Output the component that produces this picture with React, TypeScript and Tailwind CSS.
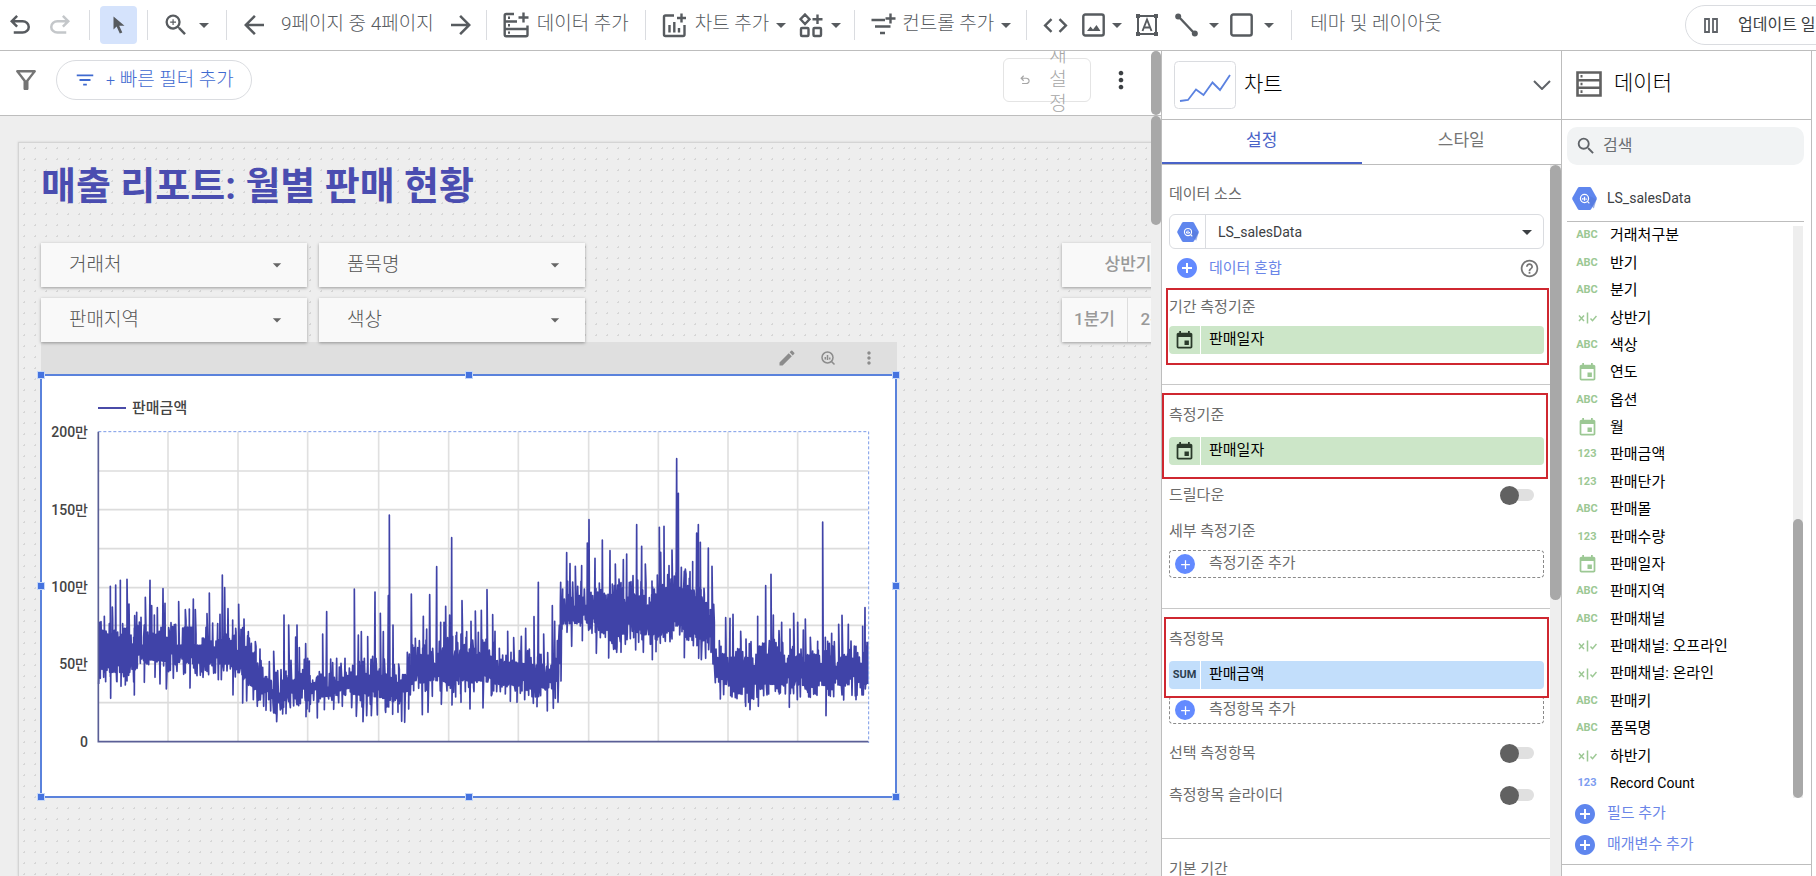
import type { ReactNode } from "react";
import {
  MdAdd,
  MdAddCircle,
  MdArrowDropDown,
  MdCode,
  MdEdit,
  MdEvent,
  MdFilterList,
  MdHelpOutline,
  MdMoreVert,
  MdOutlineFilterAlt,
  MdSearch,
  MdZoomIn,
} from "react-icons/md";

// ── Data ──────────────────────────────────────────────────────────────────────
type FieldType = "text" | "bool" | "date" | "number" | "metric";

const fields: { name: string; type: FieldType }[] = [
  { name: "거래처구분", type: "text" },
  { name: "반기", type: "text" },
  { name: "분기", type: "text" },
  { name: "상반기", type: "bool" },
  { name: "색상", type: "text" },
  { name: "연도", type: "date" },
  { name: "옵션", type: "text" },
  { name: "월", type: "date" },
  { name: "판매금액", type: "number" },
  { name: "판매단가", type: "number" },
  { name: "판매몰", type: "text" },
  { name: "판매수량", type: "number" },
  { name: "판매일자", type: "date" },
  { name: "판매지역", type: "text" },
  { name: "판매채널", type: "text" },
  { name: "판매채널: 오프라인", type: "bool" },
  { name: "판매채널: 온라인", type: "bool" },
  { name: "판매키", type: "text" },
  { name: "품목명", type: "text" },
  { name: "하반기", type: "bool" },
  { name: "Record Count", type: "metric" },
];

const reportFilters = ["거래처", "품목명", "판매지역", "색상"];

// ── Chart series ──────────────────────────────────────────────────────────────
// Chart units: three per pixel. The plot spans x 205..2515 and y 188..1118.
type Point = [number, number];

// [x, typical high, typical low]
const envelope: [number, number, number][] = [
  [205, 775, 925], [310, 790, 925], [330, 790, 885], [500, 790, 900], [600, 800, 900],
  [640, 800, 940], [690, 890, 990], [740, 940, 1020], [780, 890, 1000], [860, 910, 1000],
  [960, 910, 990], [1050, 890, 1000], [1110, 930, 1020], [1150, 850, 950], [1350, 820, 950],
  [1400, 860, 960], [1580, 880, 975], [1588, 720, 920], [1598, 670, 780], [1700, 670, 775],
  [1740, 660, 830], [1800, 670, 800], [1880, 660, 820], [1950, 640, 780], [2000, 650, 820],
  [2045, 710, 840], [2056, 840, 950], [2100, 850, 965], [2160, 850, 990], [2200, 840, 960],
  [2350, 850, 965], [2515, 850, 960],
];

const firstHalf: Point[] = [
  [209, 760], [223, 742], [227, 938], [241, 652], [242, 988], [247, 714], [257, 648], [260, 937],
  [271, 634], [273, 952], [278, 764], [286, 948], [291, 631], [297, 705], [313, 978], [314, 740],
  [320, 730], [333, 745], [343, 940], [346, 685], [360, 634], [365, 710], [373, 738], [375, 925],
  [382, 716], [390, 945], [399, 659], [405, 703], [409, 960], [416, 776], [430, 928], [437, 766],
  [446, 698], [466, 722], [478, 720], [480, 957], [490, 690], [496, 722], [519, 925], [531, 734],
  [538, 672], [548, 775], [565, 932], [570, 736], [574, 932], [577, 618], [584, 656], [594, 719],
  [608, 753], [609, 978], [617, 778], [626, 706], [638, 1002], [642, 750], [650, 996], [655, 788],
  [664, 823], [670, 992], [676, 818], [682, 1012], [690, 840], [708, 1024], [718, 878], [722, 1026],
  [731, 847], [740, 1058], [758, 1035], [762, 738], [768, 1034], [776, 768], [797, 804], [800, 1000],
  [801, 768], [808, 836], [827, 824], [828, 1043], [838, 1028], [862, 1047], [878, 795], [883, 1022],
  [890, 728], [902, 870], [911, 1021], [920, 868], [937, 1012], [945, 868], [965, 1016], [973, 660],
  [979, 1042], [985, 798], [994, 788], [999, 1058], [1010, 1040], [1013, 803], [1024, 1040],
  [1035, 669], [1042, 1038], [1051, 733], [1060, 788], [1067, 1030], [1075, 680], [1078, 438],
  [1088, 1036], [1089, 768], [1104, 1030], [1106, 885], [1115, 1057], [1124, 1060], [1132, 850],
  [1136, 1020], [1144, 675], [1156, 808], [1177, 1037], [1180, 742], [1190, 780], [1194, 1030],
  [1199, 677], [1207, 982], [1220, 593], [1232, 760], [1234, 1006], [1242, 760], [1247, 712],
  [1259, 738], [1265, 506], [1266, 1008], [1277, 984], [1280, 790], [1292, 975], [1293, 1000],
  [1296, 695],
];

const secondHalf: Point[] = [
  [3, 975], [6, 695], [20, 788], [30, 1020], [33, 757], [42, 968], [46, 726], [55, 790], [64, 724],
  [69, 1017], [81, 662], [94, 980], [98, 737], [105, 787], [110, 968], [118, 838], [136, 975],
  [143, 787], [151, 997], [161, 806], [171, 1000], [184, 802], [194, 992], [197, 778], [220, 1003],
  [222, 743], [231, 1013], [235, 640], [242, 980], [251, 795], [262, 1026], [277, 710], [280, 1018],
  [284, 757], [294, 1000], [302, 640], [303, 936], [308, 682], [320, 551], [321, 790], [330, 584],
  [335, 832], [346, 592], [365, 590], [367, 815], [382, 522], [387, 452], [390, 780], [405, 568],
  [409, 853], [418, 642], [427, 513], [446, 867], [450, 545], [457, 645], [466, 585], [470, 850],
  [477, 630], [483, 850], [490, 572], [500, 555], [501, 812], [519, 620], [527, 843], [530, 467],
  [545, 532], [550, 850], [556, 585], [576, 636], [577, 872], [588, 848], [592, 618], [598, 475],
  [602, 550], [610, 805], [612, 472], [627, 590], [630, 818], [636, 543], [650, 269], [655, 373],
  [659, 798], [664, 595], [673, 866], [676, 600], [690, 608], [698, 578], [700, 830], [710, 492],
  [715, 467], [716, 868], [721, 520], [724, 872], [732, 658], [737, 868], [745, 537], [753, 850],
  [756, 592], [761, 706], [778, 815], [781, 990], [797, 746], [810, 748], [812, 980], [819, 736],
  [825, 963], [842, 787], [857, 1012], [858, 810], [870, 1022], [893, 742], [895, 1012], [917, 650],
  [924, 970], [933, 616], [940, 738], [957, 785], [958, 975], [965, 760], [988, 1015], [990, 780],
  [1001, 733], [1012, 992], [1013, 760], [1030, 783], [1036, 750], [1043, 970], [1051, 805],
  [1068, 975], [1075, 843], [1088, 459], [1096, 805], [1098, 1040], [1115, 793], [1116, 962],
  [1136, 766], [1146, 739], [1151, 993], [1165, 766], [1188, 992], [1208, 772], [1210, 978],
  [1215, 716], [1221, 820],
];

function band(x: number): [number, number] {
  const i = Math.max(1, envelope.findIndex((e) => e[0] >= x));
  const [x0, hi0, lo0] = envelope[i - 1];
  const [x1, hi1, lo1] = envelope[i];
  const t = (x - x0) / (x1 - x0);
  return [hi0 + (hi1 - hi0) * t, lo0 + (lo1 - lo0) * t];
}

function buildSeries(): string {
  let seed = 7;
  const rand = () => {
    seed = (seed * 16807) % 2147483647;
    return seed / 2147483647;
  };
  const points: Point[] = [];
  for (let x = 206; x < 2512; x += 5) {
    const [hi, lo] = band(x);
    points.push([x, lo + 20 - rand() * 60]);
    points.push([x + 2, hi - 35 + rand() * 80]);
  }
  // every outlier starts from and falls back to the other side of the band
  for (const [x, y] of [...firstHalf, ...secondHalf.map(([px, py]): Point => [px + 1290, py])]) {
    const [hi, lo] = band(x);
    const base = y < (hi + lo) / 2 ? lo - 15 : hi + 15;
    points.push([x - 2, base], [x, y], [x + 2, base]);
  }
  points.sort((a, b) => a[0] - b[0]);
  return points.map(([x, y]) => `${x},${Math.round(y)}`).join(" ");
}

const series = buildSeries();
const gridX = [414, 624, 833, 1046, 1256, 1465, 1676, 1885, 2094, 2303];
const gridY = [306, 422, 539, 656, 769, 885, 1001];
const yLabels: [string, number][] = [
  ["200만", 63],
  ["150만", 141],
  ["100만", 218],
  ["50만", 295],
  ["0", 373],
];

// ── Icons ─────────────────────────────────────────────────────────────────────
function Symbol({ d, size = 30 }: { d: string; size?: number }) {
  return (
    <svg width={size} height={size} viewBox="0 -960 960 960" fill="currentColor" aria-hidden="true">
      <path d={d} />
    </svg>
  );
}

const UNDO =
  "M280-200v-80h284q63 0 109.5-40T720-420q0-60-46.5-100T564-560H312l104 104-56 56-200-200 200-200 56 56-104 104h252q97 0 166.5 63T800-420q0 94-69.5 157T564-200H280Z";
const REDO =
  "M396-200q-97 0-166.5-63T160-420q0-94 69.5-157T396-640h252L544-744l56-56 200 200-200 200-56-56 104-104H396q-63 0-109.5 40T240-420q0 60 46.5 100T396-280h284v80H396Z";
const BACK = "m313-440 224 224-57 56-320-320 320-320 57 56-224 224h487v80H313Z";
const FORWARD = "M647-440H160v-80h487L423-744l57-56 320 320-320 320-57-56 224-224Z";

function Stroke({ w, h, children }: { w: number; h: number; children: ReactNode }) {
  return (
    <svg
      width={w}
      height={h}
      viewBox={`0 0 ${w} ${h}`}
      fill="none"
      stroke="currentColor"
      strokeWidth="2.4"
      className="shrink-0"
      aria-hidden="true"
    >
      {children}
    </svg>
  );
}

function DataAddIcon() {
  return (
    <Stroke w={26} h={26}>
      <path d="M11 2H3.2Q1.7 2 1.7 3.500V22.500Q1.700 24.200 3.200 24.200H23Q24.500 24.200 24.500 22.700V17H1.700M1.700 9.500H14M24.500 17V13.500M20.500 0.500V10.500M15.500 5.500H25.500" />
      <path d="M5 5.800h2M5 13.300h2M5 20.600h2" />
    </Stroke>
  );
}

function ChartAddIcon() {
  return (
    <Stroke w={25} h={25}>
      <path d="M12 2.500H3.500Q2 2.500 2 4V21.500Q2 23 3.500 23H21Q22.500 23 22.500 21.500V12M19.500 0.500V9.500M15 5H24" />
      <path d="M7.500 12V19.500M12.300 9V19.500M17 15V19.500" />
    </Stroke>
  );
}

function WidgetsIcon() {
  return (
    <Stroke w={25} h={25}>
      <path d="M6 1.500L10.500 6.200L6 11L1.500 6.200ZM18.500 1.500V11M13.500 6.200H23.500" />
      <rect x="2" y="15" width="7.500" height="8" rx="1" />
      <rect x="14.500" y="15" width="7.500" height="8" rx="1" />
    </Stroke>
  );
}

function ControlAddIcon() {
  return (
    <Stroke w={25} h={25}>
      <path d="M0.500 7H14M4 13.500H19.500M9 20H14M19.500 0.500V10.500M14.500 5.500H24.500" />
    </Stroke>
  );
}

function ImageIcon() {
  return (
    <Stroke w={23} h={24}>
      <rect x="1.300" y="1.500" width="20.400" height="21" rx="2" />
      <path d="M5 18L8.500 13.500L11 16.500L14.500 12L18.500 18Z" fill="currentColor" stroke="none" />
    </Stroke>
  );
}

function TextIcon() {
  return (
    <svg width="24" height="24" viewBox="0 0 24 24" stroke="currentColor" fill="none" strokeWidth="2" aria-hidden="true">
      <rect x="3" y="3" width="18" height="18" />
      <path d="M7.500 18L12 6.500L16.500 18M9 14.500H15" strokeWidth="1.900" />
      <path d="M1 1h4v4H1zM19 1h4v4h-4zM1 19h4v4H1zM19 19h4v4h-4z" fill="currentColor" stroke="none" />
    </svg>
  );
}

function LineIcon() {
  return (
    <Stroke w={23} h={24}>
      <path d="M3 3L20 21" />
      <circle cx="3.200" cy="3.500" r="3" fill="currentColor" stroke="none" />
      <circle cx="19.800" cy="20.500" r="3" fill="currentColor" stroke="none" />
    </Stroke>
  );
}

function ServerIcon() {
  return (
    <svg width="26" height="26" viewBox="0 0 26 26" fill="none" stroke="currentColor" strokeWidth="2.600" aria-hidden="true">
      <path d="M1.500 1.500H24.500V24.500H1.500ZM1.500 9.200H24.500M1.500 16.800H24.500" />
      <path d="M4.500 5.300h2M4.500 13h2M4.500 20.600h2" />
    </svg>
  );
}

function BigQueryIcon({ size }: { size: number }) {
  return (
    <svg width={size} height={size} viewBox="0 0 24 24" className="shrink-0" aria-hidden="true">
      <path d="M7 1H17Q18 1 18.500 1.900L23.600 11.100Q24 12 23.600 12.900L18.500 22.100Q18 23 17 23H7Q6 23 5.500 22.100L0.400 12.900Q0 12 0.400 11.100L5.500 1.900Q6 1 7 1Z" fill="#5f86ee" />
      <path d="M15 16L21 21.500L23.500 13L16 9Z" fill="#5378d8" opacity="0.600" />
      <g fill="none" stroke="#fff" strokeWidth="1.200">
        <circle cx="12" cy="12" r="3.900" />
        <path d="M15 15L16.700 16.700M10.400 11.500V13.300M12 10.300V14.200M13.600 12V13.300" />
      </g>
    </svg>
  );
}

function Caret() {
  return <MdArrowDropDown size={24} className="shrink-0" aria-hidden="true" />;
}

function BoolIcon() {
  return (
    <svg width="19" height="12" viewBox="0 0 19 12" fill="none" stroke="currentColor" strokeWidth="1.500" aria-hidden="true">
      <path d="M1 3.500L6 9M6 3.500L1 9M9.500 0.500V11.500M12.500 6.500L14.500 8.700L18.500 4" />
    </svg>
  );
}

// ── Toolbar ───────────────────────────────────────────────────────────────────
function Divider() {
  return <div className="h-[30px] w-px shrink-0 bg-[#dadce0]" />;
}

function Toolbar() {
  return (
    <header className="flex h-[51px] shrink-0 items-center overflow-hidden border-b border-[#bdbdbd] text-[19px] font-light whitespace-nowrap text-[#575b5f]">
      <div className="flex shrink-0 gap-2.5 pr-3.5 pl-[5px]">
        <button aria-label="실행취소"><Symbol d={UNDO} /></button>
        <button aria-label="재실행" className="text-[#c4c7ca]"><Symbol d={REDO} /></button>
      </div>
      <Divider />
      <div className="shrink-0 px-2.5">
        <button aria-label="선택" className="flex h-[38px] w-[37px] items-center justify-center rounded-sm bg-[#d5e3fc]">
          <svg width="12" height="18" viewBox="0 0 12 18" fill="currentColor" aria-hidden="true">
            <path d="M0.500 0.500V13.500L3.600 10.600L6.800 17.500L9.300 16.400L6.200 9.700H11.500Z" />
          </svg>
        </button>
      </div>
      <Divider />
      <button aria-label="확대/축소" className="flex shrink-0 items-center gap-0.5 pr-2.5 pl-3.5">
        <MdZoomIn size={28} />
        <Caret />
      </button>
      <Divider />
      <div className="flex shrink-0 items-center gap-3 pr-2.5 pl-3">
        <button aria-label="이전 페이지"><Symbol d={BACK} /></button>
        <span className="pb-0.5">9페이지 중 4페이지</span>
        <button aria-label="다음 페이지"><Symbol d={FORWARD} /></button>
      </div>
      <Divider />
      <button className="flex shrink-0 items-center gap-2 px-4">
        <DataAddIcon />
        <span className="pb-0.5">데이터 추가</span>
      </button>
      <Divider />
      <button className="flex shrink-0 items-center pl-4">
        <ChartAddIcon />
        <span className="pb-0.5 pl-2">차트 추가</span>
        <Caret />
      </button>
      <button aria-label="커뮤니티 시각화" className="flex shrink-0 items-center pr-1.5 pl-1.5">
        <WidgetsIcon />
        <Caret />
      </button>
      <Divider />
      <button className="flex shrink-0 items-center pr-2 pl-4">
        <ControlAddIcon />
        <span className="pb-0.5 pl-1.5">컨트롤 추가</span>
        <Caret />
      </button>
      <Divider />
      <div className="flex shrink-0 items-center pr-2.5 pl-3.5">
        <button aria-label="URL 삽입"><MdCode size={29} /></button>
        <button aria-label="이미지" className="flex items-center pl-3"><ImageIcon /><Caret /></button>
        <button aria-label="텍스트" className="pl-1.5"><TextIcon /></button>
        <button aria-label="선" className="flex items-center gap-1 pl-4"><LineIcon /><Caret /></button>
        <button aria-label="도형" className="flex items-center gap-1 pl-1">
          <Stroke w={23} h={24}><rect x="1.300" y="1.500" width="20.400" height="21" rx="2" /></Stroke>
          <Caret />
        </button>
      </div>
      <Divider />
      <button className="shrink-0 pb-0.5 pl-[18px]">테마 및 레이아웃</button>
      <div className="min-w-0 flex-1" />
      <div className="w-[131px] shrink-0 overflow-hidden">
        <button className="flex h-10 w-[200px] items-center gap-5 rounded-full border border-[#dadce0] pl-[18px] text-base font-normal text-[#3c4043]">
          <svg width="14" height="15" viewBox="0 0 14 15" fill="none" stroke="#5f6368" strokeWidth="1.800" aria-hidden="true">
            <path d="M1 1H5V14H1ZM9 1H13V14H9Z" />
          </svg>
          업데이트 일시중지
        </button>
      </div>
    </header>
  );
}

// ── Report canvas ─────────────────────────────────────────────────────────────
function FilterBar() {
  return (
    <div className="flex h-[65px] shrink-0 border-b border-[#bdbdbd] bg-white">
      <div className="flex min-w-0 flex-1 items-center overflow-hidden pr-4 pb-1.5 pl-[11px] text-[19px] font-light">
        <MdOutlineFilterAlt size={30} className="shrink-0 text-[#757575]" />
        <button className="ml-[15px] flex h-10 shrink-0 items-center rounded-full border border-[#dadce0] px-[17px] text-[#3f6ad0]">
          <MdFilterList size={22} />
          <span className="pl-2.5"><span className="text-base">+</span> 빠른 필터 추가</span>
        </button>
        <div className="flex-1" />
        <button className="flex h-11 w-[88px] shrink-0 items-center justify-between rounded-md border border-[#e4e4e4] pr-[22px] pl-3.5 leading-6 text-[#a6a6a6]">
          <Symbol d={UNDO} size={14} />
          <span className="w-5">재설정</span>
        </button>
        <button aria-label="더보기" className="ml-4 shrink-0 text-[#3c4043]"><MdMoreVert size={28} /></button>
      </div>
      <div className="w-2.5 rounded-full bg-[#a8a8a8]" />
    </div>
  );
}

function ReportFilter({ label }: { label: string }) {
  return (
    <label className="relative flex h-11 items-center bg-[#f9f9f9] shadow-[0_1px_3px_rgba(0,0,0,0.35)]">
      <select aria-label={label} className="h-full w-full appearance-none pl-7 text-[19px] font-light text-[#555] outline-none">
        <option>{label}</option>
      </select>
      <MdArrowDropDown size={20} className="pointer-events-none absolute right-5 text-[#666]" />
    </label>
  );
}

const handles = [
  "-top-[5px] -left-[5px]",
  "-top-[5px] left-1/2 -ml-1",
  "-top-[5px] -right-[5px]",
  "top-1/2 -left-[5px] -mt-1",
  "top-1/2 -right-[5px] -mt-1",
  "-bottom-[5px] -left-[5px]",
  "-bottom-[5px] left-1/2 -ml-1",
  "-bottom-[5px] -right-[5px]",
];

function SalesChart() {
  return (
    <div className="relative -ml-px h-[424px] w-[857px] border-2 border-[#5a82dc] bg-white">
      <svg width="853" height="420" viewBox="1 2 853 420" role="img" aria-label="판매금액">
        <g transform="translate(-11 -5) scale(0.333333)">
          {gridX.map((x) => (
            <path key={x} d={`M${x} 188V1118`} stroke="#e0e0e0" strokeWidth="5" />
          ))}
          {gridY.map((y) => (
            <path key={y} d={`M205 ${y}H2515`} stroke="#dcdcdc" strokeWidth="5" />
          ))}
          <polyline points={series} fill="none" stroke="#4043a8" strokeWidth="5" strokeLinejoin="round" />
          <path d="M205 188H2516V1122" fill="none" stroke="#7b9be8" strokeWidth="3" strokeDasharray="9 6" />
          <path d="M205 188V1118H2515" fill="none" stroke="#5a5f96" strokeWidth="5" />
        </g>
        <path d="M57 34H85" stroke="#4a4ba8" strokeWidth="2" />
        <text x="91" y="39" fontSize="15" fontWeight="500" fill="#444">판매금액</text>
        {yLabels.map(([label, y]) => (
          <text key={label} x="47" y={y} fontSize="14" fontWeight="500" fill="#444" textAnchor="end">{label}</text>
        ))}
      </svg>
      {handles.map((place) => (
        <span key={place} className={`absolute size-2 border border-[#c5d7f8] bg-[#4573e0] ${place}`} />
      ))}
    </div>
  );
}

function Report() {
  return (
    <div className="flex min-h-0 flex-1 bg-[#eee]">
      <div className="min-w-0 flex-1 overflow-hidden pt-[26px] pl-[18px]">
        <div className="h-full w-[1400px] border-t border-l border-[#d4d4d4] bg-[#eee] bg-[radial-gradient(circle,#d6d6d6_1px,transparent_1px)] bg-size-[11px_11px] pt-[19px] pl-[22px] shadow-[0_0_2px_#ccc]">
          <h1 className="text-[38px] leading-[48px] font-bold text-[#4a4db0]">매출 리포트: 월별 판매 현황</h1>
          <div className="mt-[33px] flex gap-[477px]">
            <div className="grid grid-cols-[266px_266px] gap-x-3 gap-y-[11px]">
              {reportFilters.map((label) => (
                <ReportFilter key={label} label={label} />
              ))}
            </div>
            <div className="flex flex-col gap-[11px] text-[17px] font-medium text-[#999]">
              <div className="grid h-11 w-[264px] grid-cols-2 bg-[#f9f9f9] shadow-[0_1px_3px_rgba(0,0,0,0.35)]">
                <button>상반기</button>
              </div>
              <div className="grid h-11 w-[264px] grid-cols-4 divide-x divide-[#ddd] bg-[#f9f9f9] shadow-[0_1px_3px_rgba(0,0,0,0.35)]">
                <button>1분기</button>
                <button>2분기</button>
              </div>
            </div>
          </div>
          <div className="flex h-8 w-[856px] items-center justify-end gap-[22px] bg-[#dfdfdf] pr-[18px] text-[#8c8c8c]">
            <button aria-label="수정"><MdEdit size={20} /></button>
            <button aria-label="탐색">
              <svg width="18" height="18" viewBox="0 0 18 18" fill="none" stroke="currentColor" strokeWidth="1.500" aria-hidden="true">
                <circle cx="8.500" cy="8.500" r="5.500" />
                <path d="M12.500 12.500L15.500 15.500M6.300 8V10.500M8.500 6V11M10.700 8.500V10.500" />
              </svg>
            </button>
            <button aria-label="더보기"><MdMoreVert size={20} /></button>
          </div>
          <SalesChart />
        </div>
      </div>
      <div className="w-2.5 bg-[#eee]">
        <div className="h-[109px] rounded-full bg-[#a8a8a8]" />
      </div>
    </div>
  );
}

// ── Chart settings panel ──────────────────────────────────────────────────────
function Label({ children }: { children: ReactNode }) {
  return <div className="h-6 leading-6">{children}</div>;
}

function Chip({ icon, name, tone }: { icon: ReactNode; name: string; tone: string }) {
  return (
    <button className="flex h-7 w-full gap-px text-left text-black">
      <span className={`flex h-full w-[31px] items-center justify-center rounded-l-sm ${tone}`}>{icon}</span>
      <span className={`flex h-full flex-1 items-center rounded-r-sm pb-0.5 pl-2 ${tone}`}>{name}</span>
    </button>
  );
}

function AddSlot({ label }: { label: string }) {
  return (
    <button className="mt-[7px] flex h-7 w-full items-center gap-3.5 rounded-sm border border-dashed border-[#8a8a8a] pl-[5px]">
      <span className="flex size-5 items-center justify-center rounded-full bg-[#638aff] text-white">
        <MdAdd size={15} />
      </span>
      <span className="pb-0.5">{label}</span>
    </button>
  );
}

function Toggle({ label }: { label: string }) {
  return (
    <label className="flex h-6 items-center justify-between pr-2.5">
      {label}
      <input type="checkbox" className="peer sr-only" />
      <span className="relative flex h-3 w-[34px] items-center rounded-full bg-[#e0e0e0]">
        <span className="size-[19px] rounded-full bg-[#616161]" />
      </span>
    </label>
  );
}

function Highlight({ place }: { place: string }) {
  return <div className={`pointer-events-none absolute border-2 border-[#cf2730] ${place}`} />;
}

function ChartPanel() {
  return (
    <section className="flex w-[400px] shrink-0 flex-col border-l border-[#bdbdbd]">
      <div className="flex h-[69px] shrink-0 items-center border-b border-[#bdbdbd] pr-2.5 pl-3 text-[21px] text-black">
        <svg width="62" height="48" viewBox="0 0 62 48" fill="none" aria-hidden="true">
          <rect x="0.500" y="0.500" width="61" height="47" rx="4" stroke="#dadce0" />
          <path d="M6 40L14 39L22 28.500L29.500 34L38.500 21.500L46 29L56 14" stroke="#5b82e0" strokeWidth="1.800" />
        </svg>
        <h2 className="flex-1 pl-2 font-light">차트</h2>
        <svg width="18" height="10" viewBox="0 0 18 10" fill="none" stroke="#5f6368" strokeWidth="2" aria-hidden="true">
          <path d="M1 1L9 9L17 1" />
        </svg>
      </div>
      <div className="grid h-[45px] shrink-0 grid-cols-2 border-b border-[#bdbdbd] text-[17px]">
        <button className="border-b-2 border-[#4a63c8] text-[#4a63c8]">설정</button>
        <button className="border-b-2 border-transparent text-[#757575]">스타일</button>
      </div>
      <div className="flex min-h-0 flex-1 text-[15px] text-[#6b6b6b]">
        <div className="min-w-0 flex-1 overflow-hidden">
          <div className="relative border-b border-[#c8c8c8] pt-[17px] pr-1.5 pb-[30px] pl-[7px]">
            <Label>데이터 소스</Label>
            <label className="relative mt-2 flex h-[35px] items-center rounded-md border border-[#dadce0]">
              <span className="flex h-full w-9 items-center justify-center border-r border-[#dadce0]">
                <BigQueryIcon size={22} />
              </span>
              <select aria-label="데이터 소스" className="h-full flex-1 appearance-none pl-3 text-sm text-[#3c4043] outline-none">
                <option>LS_salesData</option>
              </select>
              <MdArrowDropDown size={24} className="pointer-events-none absolute right-1 text-[#3c4043]" />
            </label>
            <div className="flex h-[38px] items-center pr-1 pl-1.5">
              <button className="flex flex-1 items-center gap-2.5 text-[#6b86e8]">
                <MdAddCircle size={24} className="text-[#638aff]" />
                데이터 혼합
              </button>
              <MdHelpOutline size={21} className="text-[#757575]" />
            </div>
            <div className="pt-2">
              <Label>기간 측정기준</Label>
            </div>
            <div className="mt-[7px]">
              <Chip icon={<MdEvent size={21} className="text-[#2a3a2a]" />} name="판매일자" tone="bg-[#cce6c8]" />
            </div>
            <Highlight place="top-[123px] bottom-[19px] left-1 right-px" />
          </div>

          <div className="relative border-b border-[#c8c8c8] pt-[18px] pr-1.5 pb-[30px] pl-[7px]">
            <Label>측정기준</Label>
            <div className="mt-2.5">
              <Chip icon={<MdEvent size={21} className="text-[#2a3a2a]" />} name="판매일자" tone="bg-[#cce6c8]" />
            </div>
            <div className="pt-[18px]">
              <Toggle label="드릴다운" />
            </div>
            <div className="pt-3">
              <Label>세부 측정기준</Label>
            </div>
            <AddSlot label="측정기준 추가" />
            <Highlight place="top-2 left-0 right-0.5 h-[86px]" />
          </div>

          <div className="relative border-b border-[#c8c8c8] pt-[18px] pr-1.5 pb-[31px] pl-[7px]">
            <Label>측정항목</Label>
            <div className="mt-2.5">
              <Chip
                icon={<b className="text-[11px] text-[#2c3e50]">SUM</b>}
                name="판매금액"
                tone="bg-[#c2defb]"
              />
            </div>
            <AddSlot label="측정항목 추가" />
            <div className="flex flex-col gap-[18px] pt-[17px]">
              <Toggle label="선택 측정항목" />
              <Toggle label="측정항목 슬라이더" />
            </div>
            <Highlight place="top-2 left-0.5 right-px h-[81px]" />
          </div>

          <div className="px-[7px] pt-[18px]">
            <Label>기본 기간</Label>
          </div>
        </div>
        <div className="w-[11px] shrink-0 bg-[#eee]">
          <div className="h-[435px] rounded-full bg-[#a8a8a8]" />
        </div>
      </div>
    </section>
  );
}

// ── Data panel ────────────────────────────────────────────────────────────────
function TypeBadge({ type }: { type: FieldType }) {
  if (type === "bool") return <BoolIcon />;
  if (type === "date") return <MdEvent size={21} />;
  return <b className="text-[11px]">{type === "text" ? "ABC" : "123"}</b>;
}

function DataPanel() {
  return (
    <section className="mr-1 flex w-[251px] shrink-0 flex-col border-x border-[#bdbdbd] text-[15px]">
      <div className="flex h-[69px] shrink-0 items-center gap-3 border-b border-[#bdbdbd] pb-0.5 pl-3.5 text-[21px] text-black">
        <span className="text-[#616161]"><ServerIcon /></span>
        <h2 className="font-light">데이터</h2>
      </div>
      <div className="shrink-0 pt-[7px] pr-[7px] pl-[5px]">
        <label className="flex h-[38px] items-center gap-1.5 rounded-[10px] bg-[#f1f3f4] pl-2 text-base text-[#5f6368]">
          <MdSearch size={22} />
          <input type="search" aria-label="검색" placeholder="검색" className="min-w-0 flex-1 outline-none placeholder:text-[#6b6f73]" />
        </label>
        <div className="mt-3 flex h-[45px] items-center gap-2.5 border-b border-[#bdbdbd] pb-0.5 pl-[5px] text-sm text-[#3c4043]">
          <BigQueryIcon size={25} />
          LS_salesData
        </div>
      </div>
      <div className="flex min-h-0 flex-1 pr-2">
        <ul className="flex min-h-0 flex-1 flex-col pb-px text-black">
          {fields.map(({ name, type }) => (
            <li key={name} className="flex min-h-0 flex-1 items-center gap-3 pl-3.5">
              <span className={`flex w-[22px] justify-center ${type === "metric" ? "text-[#7c9cf0]" : "text-[#9cc894]"}`}>
                <TypeBadge type={type} />
              </span>
              <span className={type === "metric" ? "text-sm" : undefined}>{name}</span>
            </li>
          ))}
        </ul>
        <div className="mt-1 flex w-2.5 flex-col justify-end bg-[#eee]">
          <div className="h-[279px] rounded-full bg-[#a8a8a8]" />
        </div>
      </div>
      <div className="mb-[11px] flex shrink-0 flex-col border-b border-[#bdbdbd] pb-1 text-[#6b86e8]">
        <button className="flex h-[31px] items-center gap-2.5 pl-[11px]">
          <MdAddCircle size={24} className="text-[#5f86ee]" />
          필드 추가
        </button>
        <button className="flex h-[31px] items-center gap-2.5 pl-[11px]">
          <MdAddCircle size={24} className="text-[#5f86ee]" />
          매개변수 추가
        </button>
      </div>
    </section>
  );
}

export default function App() {
  return (
    <div className="flex h-screen flex-col overflow-hidden bg-white font-['Roboto','Noto_Sans_CJK_KR',sans-serif]">
      <Toolbar />
      <div className="flex min-h-0 flex-1">
        <main className="flex min-w-0 flex-1 flex-col">
          <FilterBar />
          <Report />
        </main>
        <ChartPanel />
        <DataPanel />
      </div>
    </div>
  );
}
